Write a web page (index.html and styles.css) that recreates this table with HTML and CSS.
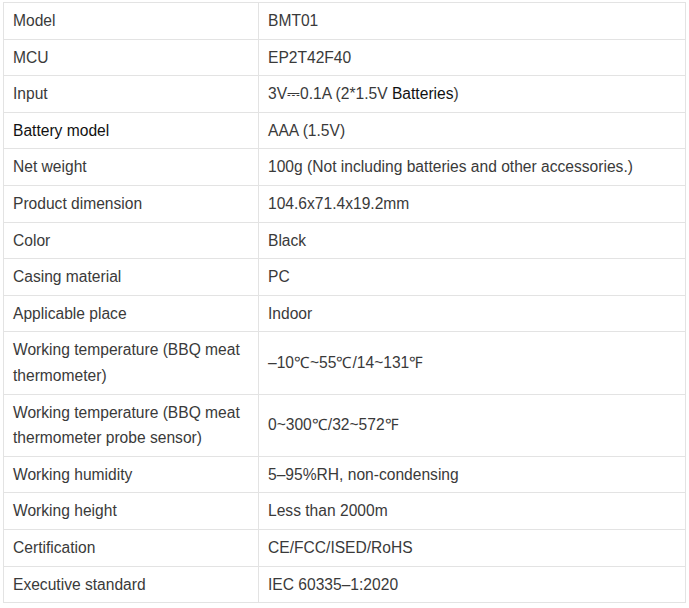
FILE: index.html
```html
<!DOCTYPE html>
<html>
<head>
<meta charset="utf-8">
<link rel="stylesheet" href="styles.css">
</head>
<body>
<table class="spec">
  <tbody>
    <tr><td class="k">Model</td><td class="v">BMT01</td></tr>
    <tr><td class="k">MCU</td><td class="v">EP2T42F40</td></tr>
    <tr><td class="k">Input</td><td class="v">3V⎓0.1A (2*1.5V <span class="dark">Batteries</span>)</td></tr>
    <tr><td class="k dark">Battery model</td><td class="v">AAA (1.5V)</td></tr>
    <tr><td class="k">Net weight</td><td class="v">100g (Not including batteries and other accessories.)</td></tr>
    <tr><td class="k">Product dimension</td><td class="v">104.6x71.4x19.2mm</td></tr>
    <tr><td class="k">Color</td><td class="v">Black</td></tr>
    <tr><td class="k">Casing material</td><td class="v">PC</td></tr>
    <tr><td class="k">Applicable place</td><td class="v">Indoor</td></tr>
    <tr><td class="k">Working temperature (BBQ meat thermometer)</td><td class="v">–10℃~55℃/14~131℉</td></tr>
    <tr><td class="k">Working temperature (BBQ meat thermometer probe sensor)</td><td class="v">0~300℃/32~572℉</td></tr>
    <tr><td class="k">Working humidity</td><td class="v">5–95%RH, non-condensing</td></tr>
    <tr><td class="k">Working height</td><td class="v">Less than 2000m</td></tr>
    <tr><td class="k">Certification</td><td class="v">CE/FCC/ISED/RoHS</td></tr>
    <tr><td class="k">Executive standard</td><td class="v">IEC 60335–1:2020</td></tr>
  </tbody>
</table>
</body>
</html>
```
FILE: styles.css
```css
html, body {
  margin: 0;
  background: #ffffff;
}
body {
  padding: 2px 3px;
  font-family: "Liberation Sans", Arial, sans-serif;
  font-size: 15.6px;
  color: #3a3a3a;
}
.spec {
  border-collapse: collapse;
  width: 683px;
  table-layout: fixed;
}
.spec td {
  border: 1px solid #e3e3e3;
  padding: 5px 9px;
  line-height: 25.6px;
  vertical-align: middle;
}
.spec .k {
  width: 236px;
}
.dark {
  color: #111111;
}
```
